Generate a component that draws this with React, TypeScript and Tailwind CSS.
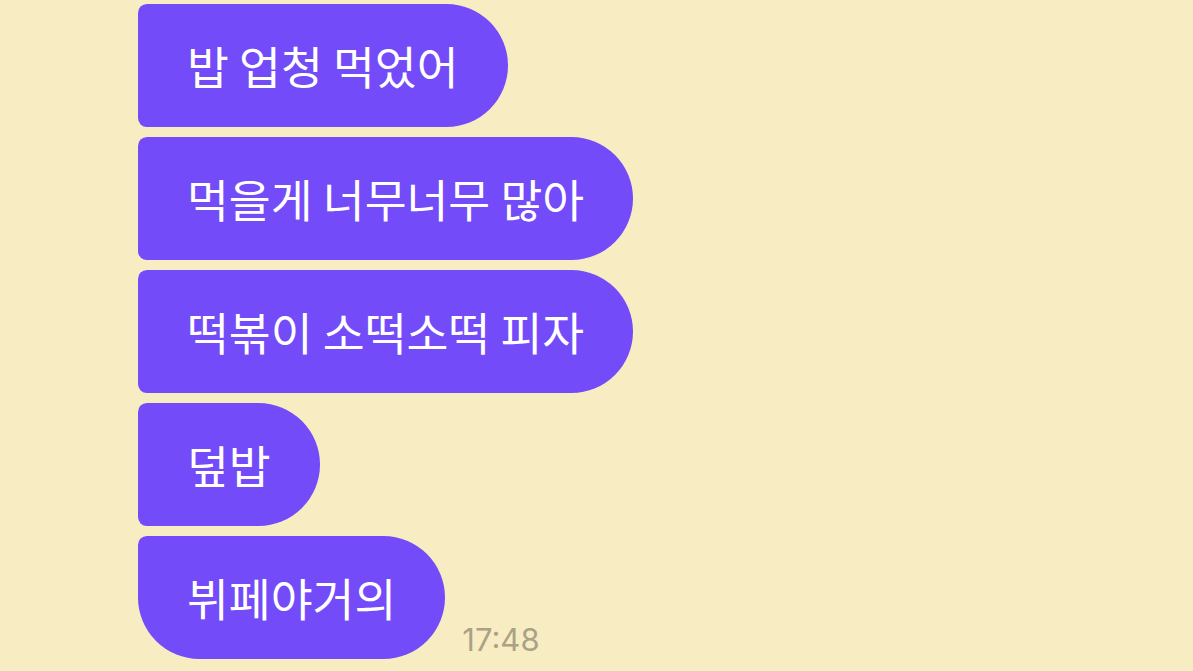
const MESSAGES = [
  "밥 업청 먹었어",
  "먹을게 너무너무 많아",
  "떡볶이 소떡소떡 피자",
  "덮밥",
  "뷔페야거의",
];

function Bubble({ text, last }: { text: string; last: boolean }) {
  return (
    <div
      className={`h-[123px] flex items-center px-[49px] bg-[#734bf9] text-white text-[45.5px] leading-none rounded-tl-[9px] rounded-tr-[62px] rounded-br-[62px] ${
        last ? "rounded-bl-[62px]" : "rounded-bl-[9px]"
      }`}
    >
      <span>{text}</span>
    </div>
  );
}

export default function App() {
  return (
    <div
      className="w-[1193px] h-[671px] bg-[#f8ecc3] pl-[138px] pt-[4px] flex flex-col gap-[10px] overflow-hidden"
      style={{ fontFamily: '"Noto Sans CJK KR", "Noto Sans", sans-serif' }}
    >
      {MESSAGES.map((m, i) => {
        const last = i === MESSAGES.length - 1;
        if (!last) {
          return (
            <div key={m} className="flex">
              <Bubble text={m} last={false} />
            </div>
          );
        }
        return (
          <div key={m} className="flex items-end gap-[17px]">
            <Bubble text={m} last />
            <span className="font-['Inter',sans-serif] text-[31px] leading-none text-[#aaa186] pb-[4px]">
              17:48
            </span>
          </div>
        );
      })}
    </div>
  );
}
